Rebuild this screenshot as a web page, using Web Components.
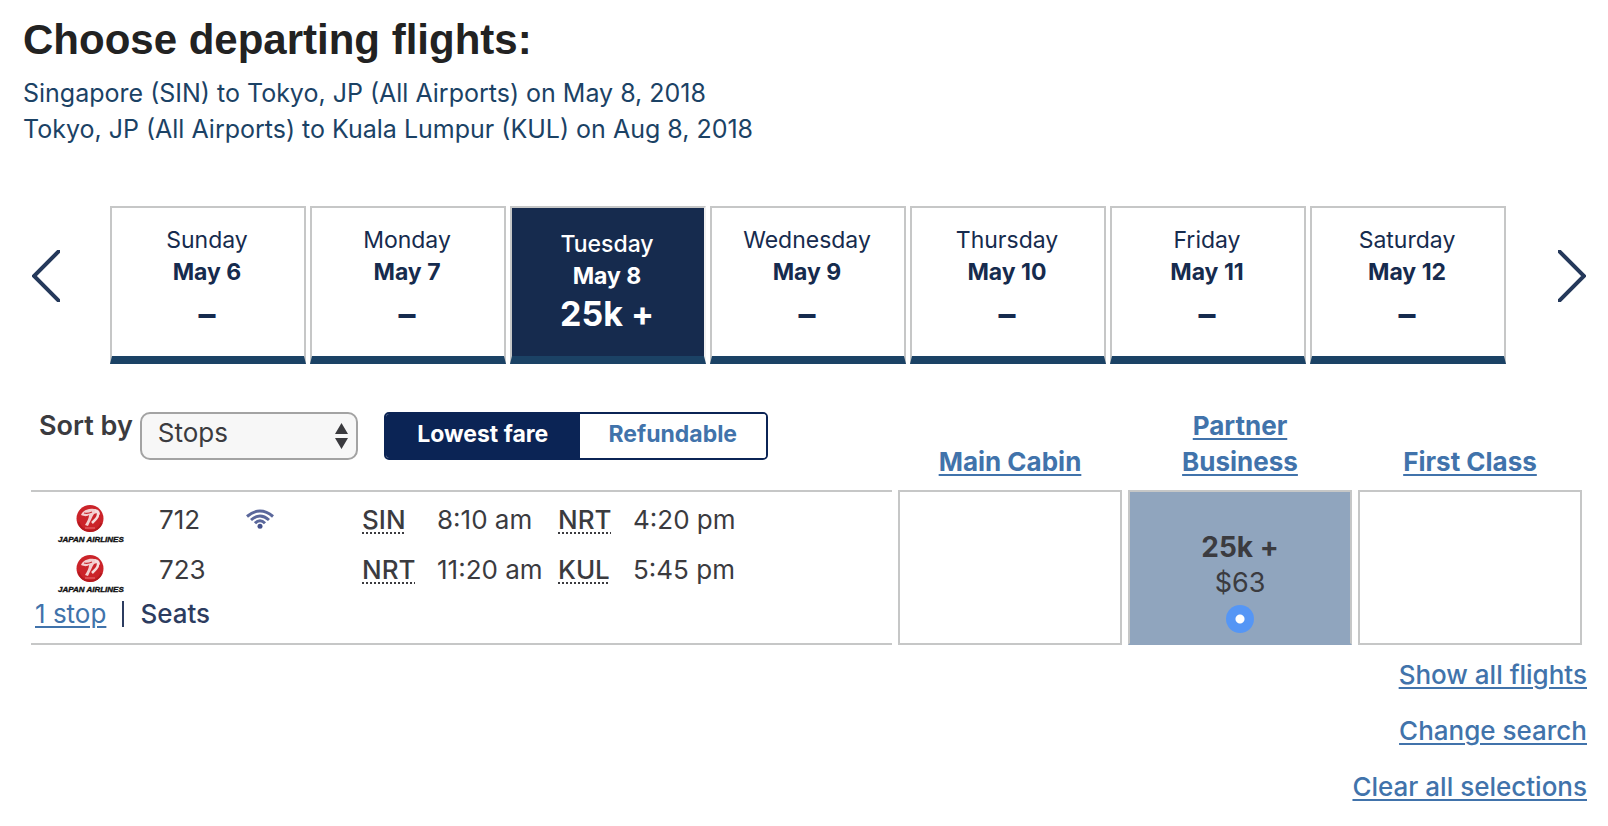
<!DOCTYPE html>
<html lang="en">
<head>
<meta charset="utf-8">
<meta name="viewport" content="width=device-width, initial-scale=1">
<title>Choose departing flights</title>
<style>
  body {
    margin: 0;
    background: #fff;
    color: #3b3b3f;
    font-family: Inter, "Liberation Sans", sans-serif;
    font-size: 26px;
    --navy: #162b4e;
    --deep: #1b4265;
    --toggle: #0b2455;
    --link: #4173ab;
    --line: #c6c7c7;
    --picked: #90a5be;
  }
</style>
</head>
<body>
<flight-page>
  <trip-heading>
    Choose departing flights:
    <span slot="leg">Singapore (SIN) to Tokyo, JP (All Airports) on May 8, 2018</span>
    <span slot="leg">Tokyo, JP (All Airports) to Kuala Lumpur (KUL) on Aug 8, 2018</span>
  </trip-heading>

  <date-strip>
    <date-card><span slot="day">Sunday</span><span slot="date">May 6</span>–</date-card>
    <date-card><span slot="day">Monday</span><span slot="date">May 7</span>–</date-card>
    <date-card selected><span slot="day">Tuesday</span><span slot="date">May 8</span>25k +</date-card>
    <date-card><span slot="day">Wednesday</span><span slot="date">May 9</span>–</date-card>
    <date-card><span slot="day">Thursday</span><span slot="date">May 10</span>–</date-card>
    <date-card><span slot="day">Friday</span><span slot="date">May 11</span>–</date-card>
    <date-card><span slot="day">Saturday</span><span slot="date">May 12</span>–</date-card>
  </date-strip>

  <flight-results></flight-results>

  <page-links>
    <text-link href="#all">Show all flights</text-link>
    <text-link href="#search">Change search</text-link>
    <text-link href="#clear">Clear all selections</text-link>
  </page-links>
</flight-page>

<script>
const define = (name, html, setup) => {
  const template = document.createElement('template');
  template.innerHTML = html;
  customElements.define(name, class extends HTMLElement {
    constructor() {
      super();
      this.attachShadow({ mode: 'open' }).append(template.content.cloneNode(true));
    }
    connectedCallback() {
      if (setup) setup(this, this.shadowRoot);
    }
  });
};

define('flight-page', `
  <style>
    :host { display: block; }
    main { padding: 16px 21px 8px 23px; }
  </style>
  <main><slot></slot></main>`);

define('trip-heading', `
  <style>
    :host { display: block; }
    h1 {
      margin: 0 0 11px;
      color: #222;
      font: bold 42px/48px "Liberation Sans", Arial, sans-serif;
    }
    p { margin: 0; color: var(--deep); font-size: 25px; line-height: 36px; }
    ::slotted([slot="leg"]) { display: block; }
  </style>
  <h1><slot></slot></h1>
  <p><slot name="leg"></slot></p>`);

define('date-strip', `
  <style>
    :host { display: block; margin-top: 59px; }
    nav { display: flex; align-items: flex-start; padding: 0 1px 0 9px; }
    .cards { flex: 1; display: grid; grid-template-columns: repeat(7, minmax(0, 1fr)); gap: 4px; margin: 0 52px 0 50px; }
    button { flex: none; width: 28px; height: 52px; margin: 44px 0 0; padding: 0; border: 0; background: none; cursor: pointer; }
    svg { display: block; width: 28px; height: 52px; fill: none; stroke: #25395b; stroke-width: 4; }
  </style>
  <nav aria-label="Departure date">
    <button type="button" aria-label="Earlier dates"><svg viewBox="0 0 28 52"><path d="M28 0 2 26 28 52"/></svg></button>
    <div class="cards"><slot></slot></div>
    <button type="button" aria-label="Later dates"><svg viewBox="0 0 28 52"><path d="M0 0 26 26 0 52"/></svg></button>
  </nav>`);

define('date-card', `
  <style>
    :host { display: grid; }
    button {
      height: 158px;
      padding: 16px 2px 0 0;
      display: flex; flex-direction: column; align-items: center; justify-content: flex-start;
      border: 2px solid var(--line);
      border-bottom: 8px solid var(--deep);
      background: #fff; color: var(--navy);
      font-family: inherit; font-size: 23px; line-height: 32px;
      cursor: pointer;
    }
    .date { font-weight: 700; }
    .fare { font-size: 34px; line-height: 52px; font-weight: 700; }
    :host([selected]) button { padding-top: 20px; background: var(--navy); color: #fff; border-right-color: #f0f0f0; }
    :host([selected]) .day { font-weight: 500; }
    :host([selected]) .fare { line-height: 44px; }
  </style>
  <button type="button">
    <span class="day"><slot name="day"></slot></span>
    <span class="date"><slot name="date"></slot></span>
    <span class="fare"><slot></slot></span>
  </button>`);

define('text-link', `
  <style>
    :host { display: inline; }
    a { color: var(--link); text-decoration: underline; text-decoration-thickness: 2px; text-underline-offset: 3px; }
  </style>
  <a href="#"><slot></slot></a>`,
  (el, root) => { root.querySelector('a').href = el.getAttribute('href') || '#'; });

define('page-links', `
  <style>
    :host { display: flex; flex-direction: column; align-items: flex-end; margin-top: 2px; font-weight: 500; line-height: 56px; }
  </style>
  <slot></slot>`);

define('sort-select', `
  <style>
    :host { display: flex; align-items: flex-start; gap: 7px; }
    label { font-size: 27px; font-weight: 600; line-height: 36px; white-space: nowrap; }
    .box { position: relative; margin-top: 4px; }
    select {
      display: block; width: 218px; height: 48px; padding: 0 40px 7px 16px;
      appearance: none;
      border: 2px solid #a3a3a3; border-radius: 10px;
      background: #f7f7f7; color: inherit;
      font-family: inherit; font-size: 26px;
    }
    svg { position: absolute; right: 10px; top: 11px; width: 13px; height: 26px; fill: #3b3b3f; pointer-events: none; }
  </style>
  <label for="sort">Sort by</label>
  <div class="box">
    <select id="sort"><option>Stops</option><option>Price</option><option>Departure</option></select>
    <svg viewBox="0 0 13 26" aria-hidden="true"><path d="M6.500 0 13 11H0ZM0 15H13L6.500 26Z"/></svg>
  </div>`);

define('fare-toggle', `
  <style>
    :host { display: flex; width: 384px; height: 48px; box-sizing: border-box; border: 2px solid var(--toggle); border-radius: 5px; overflow: hidden; }
    button { flex: 1; padding: 0 0 4px; border: 0; background: #fff; color: var(--link); font-family: inherit; font-size: 23px; font-weight: 700; line-height: 40px; cursor: pointer; }
    button[aria-pressed="true"] { flex: none; width: 194px; background: var(--toggle); color: #fff; }
  </style>
  <button type="button" aria-pressed="true">Lowest fare</button>
  <button type="button" aria-pressed="false">Refundable</button>`);

define('airline-logo', `
  <style>
    :host { display: block; width: 68px; }
    svg { display: block; width: 68px; height: 38px; }
    text { font: italic bold 8px "Liberation Sans", Arial, sans-serif; fill: #111; stroke: #111; stroke-width: .4; }
    g { filter: blur(.5px); }
  </style>
  <svg viewBox="0 0 68 38" role="img" aria-label="Japan Airlines">
    <g>
    <circle cx="33" cy="13.500" r="13.500" fill="#cb2329"/>
    <path d="M21.500 17a12 12 0 0 0 23 1" fill="none" stroke="#b5191f" stroke-width="2"/>
    <path d="M24 10C26 5 32 3 37 4c4 0 6 2 6 6-2-2-4-2-6-1-2 3-4 8-6 12l-3-1c2-3 4-7 4-10-3 2-5 1-8 0Z" fill="#f3cfcf"/>
    <path d="M38 6c4 0 4 4 1 8l-4 4" fill="none" stroke="#f6dcdc" stroke-width="2.500"/>
    <path d="M27 8c3 1 6 0 8-1" fill="none" stroke="#cb2329" stroke-width="1.200"/>
    <path d="M28 23h10" stroke="#e05a5f" stroke-width="1.500"/>
    </g>
    <text x="1" y="37">JAPAN AIRLINES</text>
  </svg>`);

define('wifi-icon', `
  <style>
    :host { display: block; }
    svg { display: block; width: 28px; height: 20px; }
  </style>
  <svg viewBox="0 0 28 20" role="img" aria-label="Wi-Fi on board" fill="none" stroke="#5a679b" stroke-width="3">
    <path d="M1 7.500Q14-3.500 27 7.500"/>
    <path d="M5 11Q14 3 23 11"/>
    <path d="M9 14.200Q14 9.200 19 14.200"/>
    <circle cx="14" cy="17.300" r="2.500" fill="#45528c" stroke="none"/>
  </svg>`);

define('flight-legs', `
  <style>
    :host { display: block; padding: 3px 0 10px; }
    table { border-collapse: collapse; table-layout: fixed; width: 828px; line-height: 50px; }
    td { padding: 0; text-align: left; vertical-align: top; height: 50px; }
    col.logo { width: 128px; } col.num { width: 87px; } col.wifi { width: 116px; }
    col.code { width: 75px; } col.time { width: 121px; }
    airline-logo { margin: 10px 0 0 26px; }
    wifi-icon { margin-top: 14px; }
    abbr { font-weight: 500; text-decoration: underline dotted 2px; text-underline-offset: 3px; text-decoration-skip-ink: none; }
    p { margin: 0; padding-left: 4px; line-height: 38px; display: flex; gap: 14px; }
    .seats { color: #2c3c60; font-weight: 500; }
    .bar { width: 2px; height: 26px; margin: 6px 2px 0; background: #2c3c60; }
  </style>
  <table>
    <colgroup><col class="logo"><col class="num"><col class="wifi"><col class="code"><col class="time"><col class="code"><col></colgroup>
    <tbody>
      <tr>
        <td><airline-logo></airline-logo></td><td>712</td><td><wifi-icon></wifi-icon></td>
        <td><abbr title="Singapore">SIN</abbr></td><td>8:10 am</td>
        <td><abbr title="Tokyo Narita">NRT</abbr></td><td>4:20 pm</td>
      </tr>
      <tr>
        <td><airline-logo></airline-logo></td><td>723</td><td></td>
        <td><abbr title="Tokyo Narita">NRT</abbr></td><td>11:20 am</td>
        <td><abbr title="Kuala Lumpur">KUL</abbr></td><td>5:45 pm</td>
      </tr>
    </tbody>
  </table>
  <p><text-link href="#stops">1 stop</text-link><span class="bar"></span><span class="seats">Seats</span></p>`);

define('fare-option', `
  <style>
    label { display: flex; flex-direction: column; align-items: center; line-height: 36px; padding: 37px 0 10px; }
    :host { display: block; }
    .miles { font-size: 28px; font-weight: 700; }
    .tax { font-size: 27px; }
    input { appearance: none; width: 28px; height: 28px; margin: 4px 0 0; border-radius: 50%; background: radial-gradient(circle, #fff 4px, #5596f5 5px); }
  </style>
  <label>
    <span class="miles"><slot></slot></span>
    <span class="tax"><slot name="tax"></slot></span>
    <input type="radio" name="fare" checked>
  </label>`);

define('flight-results', `
  <style>
    :host { display: block; margin: 44px -1px 0 2px; }
    table { width: 100%; border-collapse: separate; border-spacing: 6px 0; table-layout: fixed; }
    col.fare { width: 224px; }
    th { padding: 0 0 10px; font-size: 26px; font-weight: 700; line-height: 36px; vertical-align: bottom; text-align: center; }
    th span { display: block; max-width: 160px; margin: auto; }
    td { padding: 0; box-sizing: border-box; vertical-align: top; border: 2px solid var(--line); }
    td.legs { border-width: 2px 0; }
    td.picked { background: var(--picked); border-bottom-color: var(--picked); }
    td.tools { padding: 0 0 10px 8px; border: 0; }
    .bar { display: flex; gap: 26px; align-items: flex-start; font-size: 26px; }
    fare-toggle { margin-top: 4px; }
  </style>
  <table>
    <colgroup><col><col class="fare"><col class="fare"><col class="fare"></colgroup>
    <thead>
      <tr>
        <td class="tools"><div class="bar"><sort-select></sort-select><fare-toggle></fare-toggle></div></td>
        <th scope="col"><span><text-link href="#main">Main Cabin</text-link></span></th>
        <th scope="col"><span><text-link href="#business">Partner Business</text-link></span></th>
        <th scope="col"><span><text-link href="#first">First Class</text-link></span></th>
      </tr>
    </thead>
    <tbody>
      <tr>
        <td class="legs"><flight-legs></flight-legs></td>
        <td></td>
        <td class="picked"><fare-option>25k +<span slot="tax">$63</span></fare-option></td>
        <td></td>
      </tr>
    </tbody>
  </table>`);
</script>
</body>
</html>
